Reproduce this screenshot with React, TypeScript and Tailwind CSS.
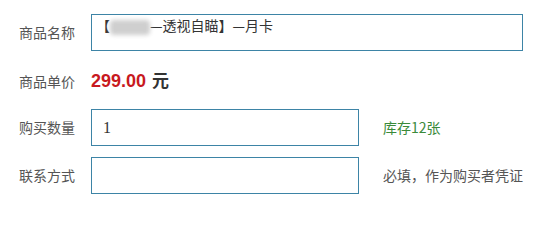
import React from "react";

const cjk = "font-['Microsoft_YaHei','Noto_Sans_CJK_SC',sans-serif]";

export default function App() {
  return (
    <div className={`w-[554px] h-[205px] bg-white pt-[14px] pl-[19px] ${cjk} text-[14px] text-[#555]`}>
      <div className="flex items-center h-[37px]">
        <div className="w-[72px]">商品名称</div>
        <div className="w-[432px] h-[37px] border border-[#3d84a6] pl-[4px] pt-[1px] leading-[18px] text-[#333] whitespace-nowrap">
          【<span className="inline-block align-middle w-[40px] h-[15px] bg-[#cfcfcf] blur-[2px] rounded-sm"></span>—透视自瞄】—月卡
        </div>
      </div>
      <div className="flex items-center h-[30px] mt-[15px]">
        <div className="w-[72px]">商品单价</div>
        <div className="flex items-baseline font-bold text-[18px]">
          <span className="font-['Liberation_Sans',Arial,sans-serif] text-[#c8191e]">299.00</span>
          <span className="ml-[6px] text-[#333] text-[17px]">元</span>
        </div>
      </div>
      <div className="flex items-center h-[37px] mt-[13px]">
        <div className="w-[72px]">购买数量</div>
        <div className="w-[268px] h-[37px] border border-[#3d84a6] flex items-center pl-[11px] font-['Liberation_Serif',serif] text-[16px] text-[#333]">
          1
        </div>
        <div className="ml-[24px] text-[#3a8a3a]">库存12张</div>
      </div>
      <div className="flex items-center h-[37px] mt-[11px]">
        <div className="w-[72px]">联系方式</div>
        <div className="w-[268px] h-[37px] border border-[#3d84a6]"></div>
        <div className="ml-[24px]">必填，作为购买者凭证</div>
      </div>
    </div>
  );
}
